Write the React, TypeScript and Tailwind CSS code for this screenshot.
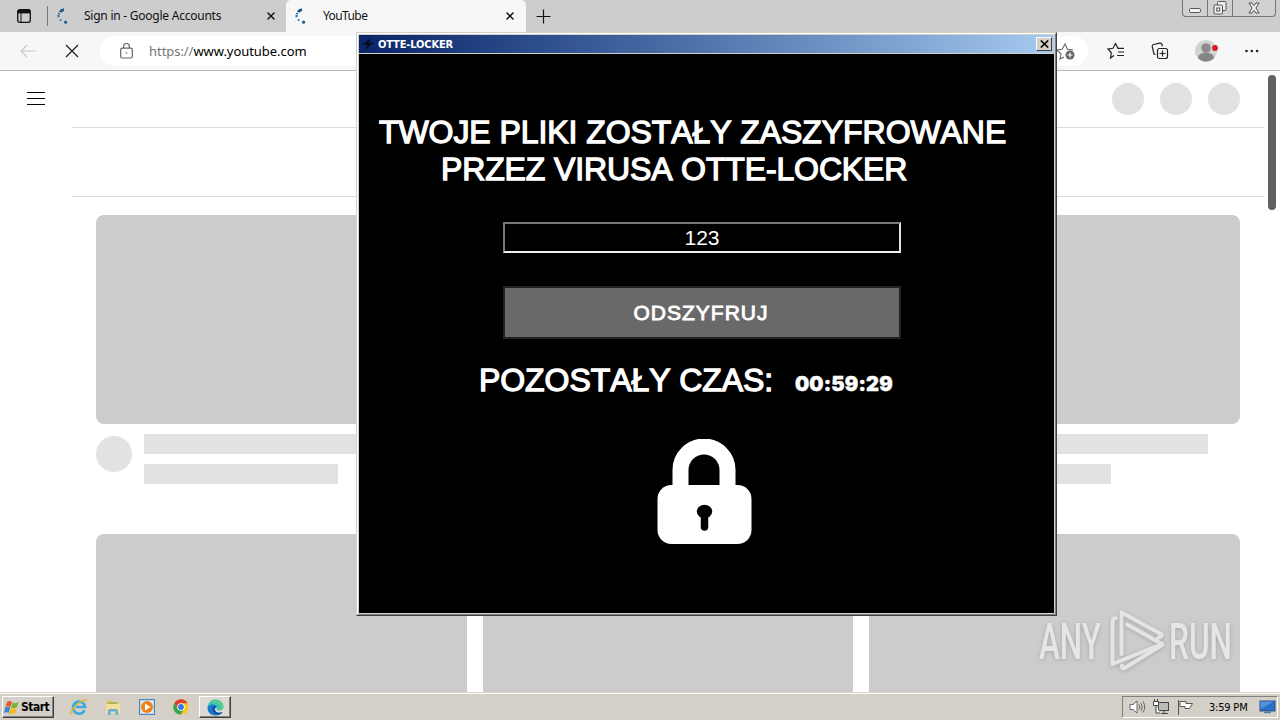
import { X } from 'lucide-react'

const UI_FONT = "font-['Noto_Sans','Open_Sans',sans-serif]"
const TAHOMA_FONT = "font-['DejaVu_Sans_Condensed','DejaVu_Sans',sans-serif]"

function Spinner() {
  return (
    <svg width="16" height="16" viewBox="0 0 16 16" fill="none" className="shrink-0">
      <path d="M1.6 9.2A6 6 0 0 1 2.400 5" stroke="#1b6a9c" strokeWidth="2" strokeDasharray="2.2 .6" />
      <path d="M3 4.100A6 6 0 0 1 7 1.600" stroke="#17598a" strokeWidth="2.6" />
      <circle cx="3.600" cy="12" r="1.1" fill="#2b7cb0" />
      <circle cx="8.600" cy="14.200" r="1.6" fill="#1d6499" />
    </svg>
  )
}

function TabStrip() {
  return (
    <div className="relative flex h-8 bg-[#cdcdcd] text-[12px] text-[#111]">
      <div className="flex w-12 items-center pl-[17px]">
        <svg width="14" height="14" viewBox="0 0 14 14">
          <rect x=".7" y=".7" width="12.6" height="12.6" rx="2" fill="none" stroke="#111" strokeWidth="1.3" />
          <path d="M1 1h12v3.4H1z" fill="#111" />
          <path d="M4 4v9" stroke="#111" />
        </svg>
      </div>
      <div className="flex w-[238px] items-center pl-[8px]">
        <span className="-ml-[9px] mr-[9px] h-5 w-px bg-[#777]" />
        <Spinner />
        <span className="ml-[11px] w-[139px] whitespace-nowrap tracking-[-0.24px]">Sign in - Google Accounts</span>
        <X className="ml-[42px] h-3 w-3 shrink-0" strokeWidth={3} />
      </div>
      <div className="flex w-60 items-center rounded-t-[5px] bg-[#f7f7f7] pl-[9px]">
        <Spinner />
        <span className="ml-[12px] w-[60px] tracking-[-0.6px]">YouTube</span>
        <X className="ml-[121px] h-3 w-3 shrink-0" strokeWidth={3} />
      </div>
      <div className="flex items-center pl-[10px]">
        <svg width="15" height="15" viewBox="0 0 15 15" stroke="#111" strokeWidth="1.2">
          <path d="M7.500.5v14M.5 7.500h14" />
        </svg>
      </div>
      <WindowButtons />
    </div>
  )
}

function WindowButtons() {
  return (
    <div className="ml-auto mr-1 flex h-[17px] overflow-hidden rounded-b-[4px] border border-t-0 border-[#777] bg-[#d0d0d0]">
      <div className="flex w-[25px] items-end justify-center border-r border-[#777] pb-[3px]">
        <svg width="12" height="5" viewBox="0 0 12 5">
          <rect x=".5" y=".5" width="11" height="4" rx="1.2" fill="#f4f4f4" stroke="#555" />
        </svg>
      </div>
      <div className="flex w-[25px] items-center justify-center border-r border-[#777]">
        <svg width="14" height="14" viewBox="0 0 14 14" fill="#eee" stroke="#555">
          <rect x="4.5" y=".5" width="8.5" height="9" rx="1" />
          <rect x="1" y="4" width="8.5" height="9" rx="1" />
          <rect x="3.7" y="7" width="3" height="3" />
        </svg>
      </div>
      <div className="flex w-[42px] items-center justify-center">
        <svg width="12" height="12" viewBox="0 0 12 12">
          <path d="M1 1h3l2 2.7L8 1h3L7.9 6 11 11H8L6 8.3 4 11H1l3.1-5z" fill="#eee" stroke="#555" />
        </svg>
      </div>
    </div>
  )
}

function Toolbar() {
  return (
    <div className="flex h-[39px] items-center border-b border-[#bababa] bg-[#f7f7f7]">
      <svg className="ml-[20px]" width="17" height="14" viewBox="0 0 17 14" fill="none" stroke="#c8c8c8" strokeWidth="1.1">
        <path d="M16 7H1M7 1 1 7l6 6" />
      </svg>
      <svg className="ml-[28px]" width="14" height="14" viewBox="0 0 14 14" stroke="#1c1c1c" strokeWidth="1.2">
        <path d="M1 1l12 12M13 1 1 13" />
      </svg>
      <div className="ml-[21px] flex h-[30px] w-[988px] items-center rounded-full bg-white pl-[20px] pr-[13px] text-[13px]">
        <svg width="13" height="16" viewBox="0 0 13 16" fill="none" stroke="#666" strokeWidth="1.2">
          <rect x=".7" y="5.2" width="11.6" height="9.8" rx="1.5" />
          <path d="M3.6 5V3.4a2.9 2.9 0 0 1 5.8 0V5" />
          <circle cx="6.5" cy="10" r=".8" fill="#666" stroke="none" />
        </svg>
        <span className="ml-[16px] mt-px whitespace-nowrap tracking-[-0.05px] text-[#767676]">
          https://<span className="text-black">www.youtube.com</span>
        </span>
        <svg className="ml-auto" width="19" height="18" viewBox="0 0 19 18" fill="none" stroke="#666" strokeWidth="1.1">
          <path d="M8 15 4 17l1-5-4-4 5.200-.8L9 2l2.500 5.200 5.500.8" />
          <circle cx="14" cy="13" r="4.500" fill="#666" stroke="none" />
          <path d="M14 10.500v5M11.500 13h5" stroke="#fff" />
        </svg>
      </div>
      <svg className="ml-[19px]" width="18" height="18" viewBox="0 0 18 18" fill="none" stroke="#222" strokeWidth="1.2">
        <path d="M7 13.500 3.500 16l.8-5.200L1 7l5-.7L8.500 1.500 11 6.300h6M11 10h6M10 13.500h7" />
      </svg>
      <svg className="ml-[26px]" width="18" height="18" viewBox="0 0 18 18" fill="none" stroke="#222" strokeWidth="1.2">
        <rect x="6.500" y="6.500" width="10" height="10" rx="2" />
        <path d="M11.500 8.500v6M8.500 11.500h6M4.500 12.500 3 12 1.200 4.500Q1 3 2.500 2.500L9 1.100Q10.700.9 11 2.500l.4 1.800" />
      </svg>
      <svg className="ml-[25px]" width="24" height="24" viewBox="0 0 24 24">
        <circle cx="12" cy="12" r="11" fill="#d2d4d3" />
        <circle cx="12" cy="9" r="4.800" fill="#8c8c8c" />
        <path d="M4 19a8 5.500 0 0 1 16 0 11 11 0 0 1-16 0z" fill="#858585" />
        <circle cx="21" cy="9" r="2.900" fill="#d71920" />
      </svg>
      <svg className="ml-[26px]" width="15" height="4" viewBox="0 0 15 4" fill="#222">
        <circle cx="2.500" cy="2" r="1.300" />
        <circle cx="7.800" cy="2" r="1.300" />
        <circle cx="13.100" cy="2" r="1.300" />
      </svg>
    </div>
  )
}

function VideoPlaceholder() {
  return (
    <div className="h-[319px]">
      <div className="h-[209px] rounded-lg bg-[#ccc]" />
      <div className="mt-[10px] flex">
        <div className="mt-[2px] h-9 w-9 rounded-full bg-[#e2e2e2]" />
        <div className="ml-3">
          <div className="h-5 w-[291px] bg-[#e2e2e2]" />
          <div className="mt-[10px] h-5 w-[194px] bg-[#e2e2e2]" />
        </div>
      </div>
    </div>
  )
}

function PageSkeleton() {
  return (
    <div className="flex h-[621px] overflow-hidden bg-white">
      <div className="w-[72px] shrink-0 pl-[27px] pt-[21px]">
        <div className="flex h-[13px] w-[18px] flex-col justify-between">
          <span className="h-px bg-black" />
          <span className="h-px bg-black" />
          <span className="h-px bg-black" />
        </div>
      </div>
      <div className="w-[1192px]">
        <div className="flex h-[57px] items-center justify-end gap-4 border-b border-[#dcdcdc] pr-6">
          <span className="h-8 w-8 rounded-full bg-[#e2e2e2]" />
          <span className="h-8 w-8 rounded-full bg-[#e2e2e2]" />
          <span className="h-8 w-8 rounded-full bg-[#e2e2e2]" />
        </div>
        <div className="h-[69px] border-b border-[#dcdcdc]" />
        <div className="grid grid-cols-3 gap-x-4 px-6 pt-[18px]">
          {[0, 1, 2, 3, 4, 5].map((i) => (
            <VideoPlaceholder key={i} />
          ))}
        </div>
      </div>
      <div className="ml-1 mt-1 h-[135px] w-2 rounded-full bg-[#606060]" />
    </div>
  )
}

function LockerWindow() {
  return (
    <div className="absolute left-[356px] top-8 h-[584px] w-[701px] border border-b-[#404040] border-l-[#d4d0c8] border-r-[#404040] border-t-[#d4d0c8]">
      <div className="h-full border border-b-[#808080] border-l-white border-r-[#808080] border-t-white">
        <div className="flex h-full flex-col border border-[#d4d0c8] bg-black">
          <div className="flex h-[19px] items-center border-b border-[#d4d0c8] bg-gradient-to-r from-[#0a246a] to-[#a6caf0] pl-[3px] pr-[2px]">
            <svg width="13" height="12" viewBox="0 0 13 12">
              <path d="M9 0 0 7l5-.4L3 12l9-7.300-5 .3z" fill="#080d20" />
            </svg>
            <span className={`ml-[3px] text-[11px] font-bold leading-none tracking-[-0.15px] text-white ${TAHOMA_FONT}`}>
              OTTE-LOCKER
            </span>
            <button className="ml-auto flex h-[14px] w-4 items-center justify-center border border-b-[#404040] border-l-white border-r-[#404040] border-t-white bg-[#d4d0c8]">
              <svg width="9" height="8" viewBox="0 0 9 8" stroke="#000" strokeWidth="1.600">
                <path d="M.8.500l7.400 7M8.200.500.8 7.500" />
              </svg>
            </button>
          </div>
          <LockerForm />
        </div>
      </div>
    </div>
  )
}

function LockerForm() {
  return (
    <div className="flex-1 font-['Liberation_Sans',Arial,sans-serif] text-white [font-kerning:none]">
      <h1 className="pt-[60px] text-[32px] leading-[37px] tracking-[-0.07px] [-webkit-text-stroke:1.3px_white]">
        <span className="block whitespace-nowrap pl-[20px]">TWOJE PLIKI ZOSTAŁY ZASZYFROWANE</span>
        <span className="block whitespace-nowrap pl-[82px] tracking-[-0.13px]">PRZEZ VIRUSA OTTE-LOCKER</span>
      </h1>
      <div className="ml-[144px] mt-[34px] flex h-[31px] w-[398px] items-center justify-center border-2 border-b-[#f0f0f0] border-l-[#777] border-r-[#e0e0e0] border-t-[#777] text-[21px] leading-none">
        123
      </div>
      <button className="ml-[144px] mt-[33px] flex h-[53px] w-[398px] items-center justify-center border-2 border-[#222] bg-[#696969] pr-[2px] text-[21px] leading-none tracking-[1px] [-webkit-text-stroke:0.9px_white]">
        ODSZYFRUJ
      </button>
      <div className="mt-[22px] flex h-[38px] items-center pl-[120px]">
        <span className="w-[316px] whitespace-nowrap text-[32px] tracking-[-0.07px] [-webkit-text-stroke:1.3px_white]">
          POZOSTAŁY CZAS:
        </span>
        <span className="pt-[8px] font-['Inter','DejaVu_Sans',sans-serif] text-[20px] font-black leading-none tracking-[0.15px] [-webkit-text-stroke:0.4px_white]">
          00:59:29
        </span>
      </div>
      <svg className="ml-[298px] mt-[40px]" width="95" height="106" viewBox="0 0 95 106">
        <path d="M23.500 52V31a23.500 23.500 0 0 1 47 0v21" fill="none" stroke="#fff" strokeWidth="16" />
        <rect y="46" x=".5" width="94" height="59" rx="14" fill="#fff" />
        <ellipse cx="47.500" cy="72.500" rx="7.700" ry="6.700" fill="#000" />
        <path d="M47.500 74v14" stroke="#000" strokeWidth="7.500" strokeLinecap="round" />
      </svg>
    </div>
  )
}

function Watermark() {
  return (
    <svg
      className="absolute left-[1030px] top-[600px] opacity-75 drop-shadow-[0_1px_2px_#999]"
      width="230"
      height="90"
      viewBox="0 0 230 90"
      fontFamily="Roboto, sans-serif"
      fontSize="50"
      fontWeight="500"
      fill="#efefef"
    >
      <text x="9" y="59" textLength="62" lengthAdjust="spacingAndGlyphs">ANY</text>
      <text x="139" y="59" textLength="63" lengthAdjust="spacingAndGlyphs">RUN</text>
      <g fill="none" stroke="#ededed" strokeWidth="4" strokeLinecap="round" strokeLinejoin="round">
        <path d="M86 18q-3.500 0-3.500 4v42L132 44 97 24.500" />
        <path d="M91.500 54V12.500L131 34q2 2-3 4M132 45 94 68.500q-2.500.5-2-3" />
      </g>
    </svg>
  )
}

function Taskbar() {
  return (
    <div className={`flex h-7 items-center border-t border-[#d4d0c8] bg-[#d4d0c8] text-black shadow-[inset_0_1px_0_white] ${TAHOMA_FONT}`}>
      <div className="ml-[2px] mt-[1px] flex h-[22px] w-[52px] items-center border border-b-[#404040] border-l-white border-r-[#404040] border-t-white pl-[1px] shadow-[inset_-1px_-1px_0_#808080]">
        <svg width="16" height="15" viewBox="0 0 16 15" className="shrink-0">
          <path d="M3 2q3-2 5 0L6.500 7Q4 5.500 1.500 7z" fill="#e65b25" />
          <path d="M8.600 2.500q3 1.500 6-.5L13.100 7q-3 2-6 .4z" fill="#79b43c" />
          <path d="M1.200 7.600q2.500-1.500 5 0L4.700 13Q2.500 11.500 0 13z" fill="#3b86d1" />
          <path d="M6.800 8q3 1.500 6-.4L11.600 13q-3.500 2-6.300.4z" fill="#f5bd25" />
        </svg>
        <span className="ml-px text-[12px] font-bold leading-none tracking-[-0.5px]">Start</span>
      </div>
      <svg className="ml-[16px] mt-px" width="18" height="18" viewBox="0 0 18 18" fill="none">
        <path d="M14.500 12.200A6 6 0 1 1 15 9H5.500" stroke="#3fa9dd" strokeWidth="2.700" />
        <path d="M2.500 15.500C-1 18 1 12 6 7.500S17-.5 16.500 3.500" stroke="#e8b72c" strokeWidth="1.400" />
      </svg>
      <svg className="ml-[17px] mt-px" width="16" height="16" viewBox="0 0 16 16">
        <path d="M1 3l1-1.500h5L8 3h6v3H1z" fill="#e5c869" />
        <path d="M1 5h14v9H1z" fill="#f4df94" />
        <path d="M3 16v-4q0-2 2-2h6q2 0 2 2v4h-2.500v-3.500h-5V16z" fill="#62aede" />
        <path d="M3 4h9" stroke="#69a84c" />
      </svg>
      <svg className="ml-[18px] mt-px" width="16" height="16" viewBox="0 0 16 16">
        <rect x=".5" y=".5" width="15" height="15" fill="#b6d6ee" stroke="#4b88bd" />
        <rect x="2" y="2" width="12" height="12" fill="#e5edf3" />
        <circle cx="8" cy="8" r="6" fill="#f08119" />
        <path d="M6 4.500v7L11.500 8z" fill="#fff" />
      </svg>
      <svg className="ml-[18px] mt-px" width="16" height="16" viewBox="0 0 16 16">
        <circle cx="8" cy="8" r="7.700" fill="#f9c722" />
        <path d="M1.300 4.100A7.700 7.700 0 0 1 14.700 4.200H8L4.800 9.800z" fill="#df3e31" />
        <path d="M1.300 4.100A7.700 7.700 0 0 0 7.500 15.700L11 10 4.800 9.800z" fill="#35a454" />
        <circle cx="8" cy="8" r="3.800" fill="#fff" />
        <circle cx="8" cy="8" r="2.900" fill="#3777df" />
      </svg>
      <div className="ml-[10px] mt-[1px] flex h-[22px] w-8 items-center justify-center border border-b-[#404040] border-l-white border-r-[#404040] border-t-white bg-[#dedad3] shadow-[inset_-1px_-1px_0_#808080]">
        <svg width="17" height="17" viewBox="0 0 17 17">
          <path d="M.5 8.500C1 3 4.500.5 8.500.5c4.800 0 8 3.500 8 7 0 3-2.200 4-4.500 4-2.500 0-3-1-2-2.200C10.500 5.500 4 4.500.5 8.500z" fill="#3cc4b4" />
          <path d="M4 2.500Q8-.5 12.500 1.700 16.600 4 16.500 8q-1 3-4 3.300Q16 5 10 4.500z" fill="#58cf86" />
          <path d="M.5 8.500C2.500 4.500 9 4.500 10 8.300 6.500 8.500 7 13 11 13.700c2 .3 3.500-.2 4.600-.7-1.600 2.500-4.300 3.600-7.100 3.500C3 16.200.2 12.500.5 8.500z" fill="#1877cf" />
          <path d="M5.500 10C5.500 6.500 9 6.500 9.800 8 6.500 8.800 7.500 13 11 13.700c2 .3 3.500-.2 4.600-.7-3 4.500-10 3-10.100-3z" fill="#154f9e" />
        </svg>
      </div>
      <div className="ml-auto mr-[2px] mt-[1px] flex h-[22px] w-[156px] items-center border border-b-white border-l-[#808080] border-r-white border-t-[#808080] pl-[6px]">
        <svg width="17" height="14" viewBox="0 0 17 14" fill="none" stroke="#666">
          <path d="M1 4.500h3L8 1v12L4 9.500H1z" fill="#fff" />
          <path d="M10 4.500q1.500 2.500 0 5M12 3q2.500 4 0 8M14 1.500q3.500 5.500 0 11" />
        </svg>
        <svg className="ml-[7px]" width="17" height="16" viewBox="0 0 17 16" stroke="#444">
          <rect x="5.500" y="3.500" width="10" height="8" fill="#bbb" />
          <path d="M8 14.500h7M11 11.500v3" />
          <path d="M.5 2.500h5v4h-5zM1.500 0v2.500M4.500 0v2.500M3 6.500V14h4" fill="#fff" />
        </svg>
        <svg className="ml-[7px]" width="17" height="15" viewBox="0 0 17 15" stroke="#555" fill="#fff">
          <path d="M1.500 0v15M3 1.500h6v2h6.500l-3 5H8v-2H3z" />
        </svg>
        <span className="ml-[15px] w-[41px] whitespace-nowrap text-[11px] leading-none tracking-[-0.2px]">3:59 PM</span>
        <svg className="ml-[9px] shrink-0" width="17" height="14" viewBox="0 0 17 14">
          <rect x="1" y="1" width="15" height="10" fill="#2b70c5" stroke="#254c87" />
          <path d="M1.500 9V1.500H15z" fill="#5592dc" />
          <path d="M5 12.500h7" stroke="#537cac" strokeWidth="1.500" />
        </svg>
      </div>
    </div>
  )
}

export default function App() {
  return (
    <div className={`relative h-[720px] w-[1280px] overflow-hidden bg-white ${UI_FONT}`}>
      <TabStrip />
      <Toolbar />
      <PageSkeleton />
      <Taskbar />
      <LockerWindow />
      <Watermark />
    </div>
  )
}
